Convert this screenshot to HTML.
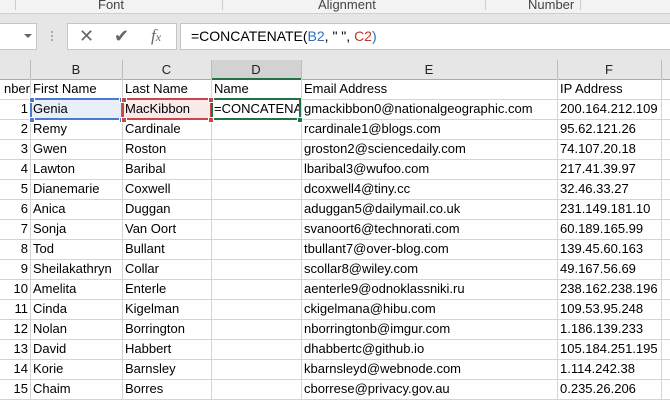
<!DOCTYPE html>
<html><head><style>
body{margin:0;width:670px;height:400px;overflow:hidden;background:#fff;font-family:"Liberation Sans",sans-serif;position:relative}
.a{position:absolute}
.c{position:absolute;height:20px;line-height:20px;font-size:13px;color:#000;white-space:nowrap;overflow:hidden;box-sizing:border-box;padding-left:3px}
</style></head><body>
<div class="a" style="left:0;top:0;width:670px;height:13px;background:#f3f3f3"></div>
<div class="a" style="left:0;top:13px;width:670px;height:1px;background:#d0d0d0"></div>
<div class="a" style="left:0;top:14px;width:670px;height:46px;background:#e6e6e6"></div>
<div class="a" style="left:98px;top:-3px;font-size:13px;color:#444">Font</div>
<div class="a" style="left:318px;top:-3px;font-size:13px;color:#444">Alignment</div>
<div class="a" style="left:528px;top:-3px;font-size:13px;color:#444">Number</div>
<div class="a" style="left:15px;top:0;width:1px;height:10px;background:#ccc"></div>
<div class="a" style="left:222px;top:0;width:1px;height:10px;background:#ccc"></div>
<div class="a" style="left:485px;top:0;width:1px;height:10px;background:#ccc"></div>
<div class="a" style="left:580px;top:0;width:1px;height:10px;background:#ccc"></div>
<div class="a" style="left:0;top:23px;width:36px;height:25px;background:#fff;border:1px solid #c6c6c6;border-left:none"></div>
<div class="a" style="left:24px;top:34px;width:0;height:0;border-left:4px solid transparent;border-right:4px solid transparent;border-top:4px solid #666"></div>
<div class="a" style="left:51px;top:31px;width:2px;height:11px;background:repeating-linear-gradient(#aaa 0 2px,transparent 2px 4px)"></div>
<div class="a" style="left:67px;top:23px;width:108px;height:25px;background:#fff;border:1px solid #c6c6c6"></div>
<div class="a" style="left:79px;top:26px;font-size:18px;color:#666">✕</div>
<div class="a" style="left:114px;top:26px;font-size:18px;color:#666">✔</div>
<div class="a" style="left:151px;top:26px;font-size:17px;color:#666;font-family:'Liberation Serif',serif;font-style:italic">f<span style="font-size:12px">x</span></div>
<div class="a" style="left:180px;top:23px;width:490px;height:25px;background:#fff;border-top:1px solid #c6c6c6;border-bottom:1px solid #c6c6c6;border-left:1px solid #c6c6c6"></div>
<div class="a" style="left:191px;top:28px;font-size:14px;color:#000">=CONCATENATE(<span style="color:#2f6ebd">B2</span>, " ", <span style="color:#c0392b">C2</span><span style="color:#2f6ebd">)</span></div>
<div class="a" style="left:0;top:60px;width:670px;height:19px;background:#e6e6e6;border-bottom:1px solid #ababab"></div>
<div class="a" style="left:211px;top:60px;width:90px;height:18px;background:#d2d2d2;border-bottom:2px solid #217346"></div>
<div id="g"></div>
<script>
var cols=[0,30,122,211,301,557,661,700];
var L=['','B','C','D','E','F',''];
var h='';
for(var i=1;i<7;i++){h+='<div class="a" style="left:'+cols[i]+'px;top:60px;width:1px;height:19px;background:#bcbcbc"></div>';
h+='<div class="a" style="left:'+cols[i]+'px;top:60px;width:'+(cols[i+1]-cols[i])+'px;height:19px;line-height:19px;text-align:center;font-size:13px;color:#222">'+L[i]+'</div>';}
for(var r=0;r<16;r++){var y=79+r*20;h+='<div class="a" style="left:0;top:'+(y+20)+'px;width:670px;height:1px;background:#d4d4d4"></div>';}
for(var i=1;i<7;i++)h+='<div class="a" style="left:'+cols[i]+'px;top:79px;width:1px;height:321px;background:#d4d4d4"></div>';
h+='<div class="a" style="left:31px;top:100px;width:91px;height:19px;background:#e8eff9"></div>';
h+='<div class="a" style="left:123px;top:100px;width:88px;height:19px;background:#f9e9e9"></div>';
var d=[["nber","First Name","Last Name","Name","Email Address","IP Address"],
["1","Genia","MacKibbon","=CONCATENA","gmackibbon0@nationalgeographic.com","200.164.212.109"],
["2","Remy","Cardinale","","rcardinale1@blogs.com","95.62.121.26"],
["3","Gwen","Roston","","groston2@sciencedaily.com","74.107.20.18"],
["4","Lawton","Baribal","","lbaribal3@wufoo.com","217.41.39.97"],
["5","Dianemarie","Coxwell","","dcoxwell4@tiny.cc","32.46.33.27"],
["6","Anica","Duggan","","aduggan5@dailymail.co.uk","231.149.181.10"],
["7","Sonja","Van Oort","","svanoort6@technorati.com","60.189.165.99"],
["8","Tod","Bullant","","tbullant7@over-blog.com","139.45.60.163"],
["9","Sheilakathryn","Collar","","scollar8@wiley.com","49.167.56.69"],
["10","Amelita","Enterle","","aenterle9@odnoklassniki.ru","238.162.238.196"],
["11","Cinda","Kigelman","","ckigelmana@hibu.com","109.53.95.248"],
["12","Nolan","Borrington","","nborringtonb@imgur.com","1.186.139.233"],
["13","David","Habbert","","dhabbertc@github.io","105.184.251.195"],
["14","Korie","Barnsley","","kbarnsleyd@webnode.com","1.114.242.38"],
["15","Chaim","Borres","","cborrese@privacy.gov.au","0.235.26.206"]];
for(var r=0;r<16;r++){var y=79+r*20;for(var c=0;c<6;c++){var w=cols[c+1]-cols[c];var t=d[r][c];
if(c==0&&r>0)h+='<div class="c" style="left:0;top:'+y+'px;width:30px;text-align:right;padding-right:2px">'+t+'</div>';
else if(c==0)h+='<div class="c" style="left:-3px;top:'+y+'px;width:33px;text-align:right;padding:0">'+t+'</div>';
else h+='<div class="c" style="left:'+cols[c]+'px;top:'+y+'px;width:'+w+'px">'+t+'</div>';}}
h+='<div class="a" style="left:30px;top:98px;width:89px;height:18px;border:2px solid #4a7bd0"></div>';
h+='<div class="a" style="left:122px;top:98px;width:86px;height:18px;border:2px solid #c9464a"></div>';
h+='<div class="a" style="left:211px;top:98px;width:86px;height:18px;border:2px solid #217346"></div>';
[[29,97,'#4a7bd0'],[119,97,'#4a7bd0'],[29,117,'#4a7bd0'],[119,117,'#4a7bd0'],[121,97,'#c9464a'],[208,97,'#c9464a'],[121,117,'#c9464a'],[208,117,'#c9464a'],[297,117,'#217346']].forEach(function(p){h+='<div class="a" style="left:'+p[0]+'px;top:'+p[1]+'px;width:4px;height:4px;background:'+p[2]+';border:1px solid #fff"></div>';});
document.getElementById('g').innerHTML=h;
</script>
</body></html>
